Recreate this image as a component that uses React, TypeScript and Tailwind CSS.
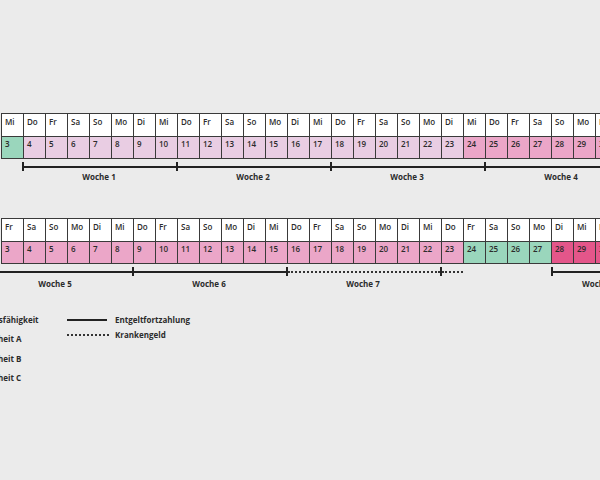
const DAYS = ["Mo", "Di", "Mi", "Do", "Fr", "Sa", "So"];

const GREEN = "bg-[#9ad6bc]";
const LIGHT = "bg-[#e9cde3]";
const PINK = "bg-[#eba6c8]";
const HOT = "bg-[#e4568a]";

type Cell = { day: string; num: number; color: string };

function buildRow(startDay: number, colorOf: (n: number) => string): Cell[] {
  const cells: Cell[] = [];
  for (let i = 0; i < 28; i++) {
    const num = 3 + i;
    cells.push({ day: DAYS[(startDay + i) % 7], num, color: colorOf(num) });
  }
  return cells;
}

const row1 = buildRow(2, (n) => (n === 3 ? GREEN : n <= 23 ? LIGHT : PINK));
const row2 = buildRow(4, (n) => (n <= 23 ? PINK : n <= 27 ? GREEN : HOT));

function Cells({ cells }: { cells: Cell[] }) {
  return (
    <div className="ml-[1px] flex border-l border-t border-[#3a3a3a]">
      {cells.map((c) => (
        <div key={c.num} className="flex w-[22px] shrink-0 flex-col border-r border-[#3a3a3a]">
          <div className="h-[23px] border-b border-[#3a3a3a] bg-white pl-[3px] pt-[3px] text-[8px] font-semibold leading-[10px]">
            {c.day}
          </div>
          <div className={`h-[22px] border-b border-[#3a3a3a] pl-[3px] pt-[2px] text-[8px] font-semibold leading-[10px] ${c.color}`}>
            {c.num}
          </div>
        </div>
      ))}
    </div>
  );
}

type Seg = {
  width: string;
  kind: "solid" | "dotted" | "none";
  tick: boolean;
  label?: string;
  labelClass?: string;
};

function Segment({ seg }: { seg: Seg }) {
  return (
    <div className={`${seg.width} flex shrink-0 flex-col`}>
      <div className="flex h-[9px] items-center">
        {seg.tick && <div className="h-[9px] w-[2px] shrink-0 bg-[#222]" />}
        {seg.kind === "solid" && <div className="h-[2px] flex-1 bg-[#222]" />}
        {seg.kind === "dotted" && <div className="flex-1 border-t-2 border-dotted border-[#333]" />}
      </div>
      {seg.label && (
        <div className={`text-[8px] font-bold leading-[10px] ${seg.labelClass ?? "text-center"}`}>
          {seg.label}
        </div>
      )}
    </div>
  );
}

const timeline1: Seg[] = [
  { width: "w-[154px]", kind: "solid", tick: true, label: "Woche 1", labelClass: "text-center pt-[1px]" },
  { width: "w-[154px]", kind: "solid", tick: true, label: "Woche 2", labelClass: "text-center pt-[1px]" },
  { width: "w-[154px]", kind: "solid", tick: true, label: "Woche 3", labelClass: "text-center pt-[1px]" },
  { width: "w-[154px]", kind: "solid", tick: true, label: "Woche 4", labelClass: "text-center pt-[1px]" },
];

const timeline2: Seg[] = [
  { width: "w-[154px]", kind: "solid", tick: true, label: "Woche 5", labelClass: "text-center pt-[3px]" },
  { width: "w-[154px]", kind: "solid", tick: true, label: "Woche 6", labelClass: "text-center pt-[3px]" },
  { width: "w-[154px]", kind: "dotted", tick: true, label: "Woche 7", labelClass: "text-center pt-[3px]" },
  { width: "w-[23px]", kind: "dotted", tick: true },
  { width: "w-[88px]", kind: "none", tick: false },
  { width: "w-[154px]", kind: "solid", tick: true, label: "Woche 1", labelClass: "pl-[31px] pt-[3px]" },
];

const legend = [
  { label: "Arbeitsfähigkeit", color: GREEN },
  { label: "Krankheit A", color: LIGHT },
  { label: "Krankheit B", color: PINK },
  { label: "Krankheit C", color: HOT },
];

export default function App() {
  return (
    <div className="h-[480px] w-[600px] overflow-hidden bg-[#ebebeb] pt-[113px] font-['Open_Sans','Liberation_Sans',sans-serif] text-[#2b2b2b]">
      <Cells cells={row1} />
      <div className="ml-[22px] mt-[3px] flex">
        {timeline1.map((s, i) => (
          <Segment key={i} seg={s} />
        ))}
      </div>

      <div className="mt-[36px]">
        <Cells cells={row2} />
      </div>
      <div className="-ml-[22px] mt-[3px] flex">
        {timeline2.map((s, i) => (
          <Segment key={i} seg={s} />
        ))}
      </div>

      <div className="-ml-[47px] mt-[21px] flex">
        <div className="flex w-[114px] shrink-0 flex-col">
          {legend.map((l) => (
            <div key={l.label} className="flex h-[19.5px] items-center gap-[8px]">
              <div className={`h-[12px] w-[13px] shrink-0 ${l.color}`} />
              <span className="text-[8px] font-bold">{l.label}</span>
            </div>
          ))}
        </div>
        <div className="flex flex-col pt-[3px]">
          <div className="flex h-[14px] items-center gap-[8px]">
            <div className="h-[2px] w-[40px] bg-[#222]" />
            <span className="text-[8px] font-bold">Entgeltfortzahlung</span>
          </div>
          <div className="flex h-[15px] items-center gap-[6px]">
            <div className="w-[42px] border-t-2 border-dotted border-[#333]" />
            <span className="text-[8px] font-bold">Krankengeld</span>
          </div>
        </div>
      </div>
    </div>
  );
}
